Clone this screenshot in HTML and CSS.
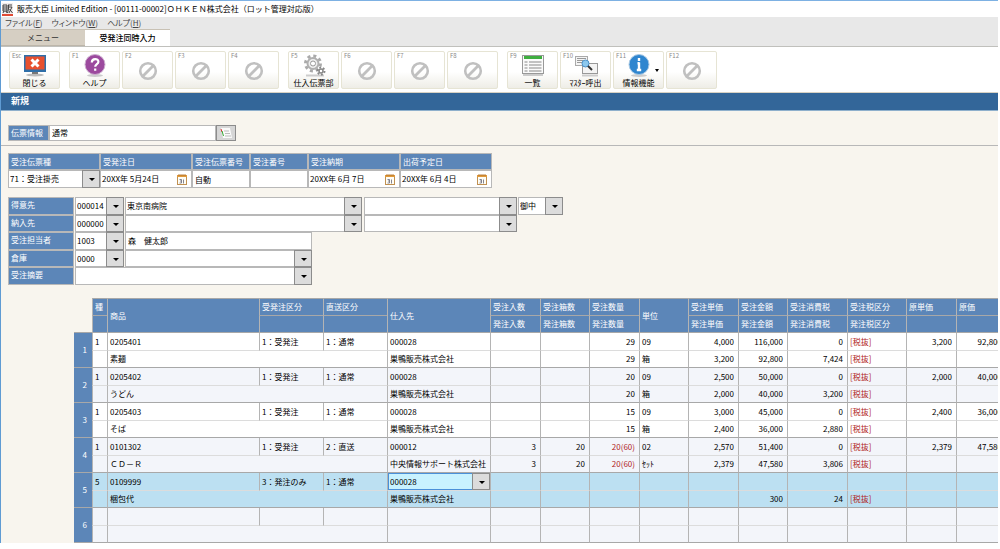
FILE: index.html
```html
<!DOCTYPE html>
<html lang="ja">
<head>
    <meta charset="UTF-8">
    <meta name="viewport" content="width=device-width, initial-scale=1.0">
    <title>販売大臣 Limited Edition</title>
    <link rel="stylesheet" href="styles.css">
</head>
<body>
    <!-- 共通アイコン -->
    <svg class="defs" width="0" height="0">
        <symbol id="icon-none" viewBox="0 0 20 20">
            <circle cx="10" cy="10" r="7.8" fill="none" stroke="#c0c0c0" stroke-width="2.6"/>
            <path d="M4.8 15.2L15.2 4.8" stroke="#c0c0c0" stroke-width="2.8"/>
        </symbol>
        <symbol id="icon-cal" viewBox="0 0 10 11">
            <rect x="0.5" y="1.5" width="9" height="9" fill="#fffdf5" stroke="#c09050"/>
            <rect x="0" y="1" width="10" height="2" fill="#e09a3c"/>
            <path d="M2 0v2M4 0v2M6 0v2M8 0v2" stroke="#a86820" stroke-width="0.8"/>
            <path d="M2.5 5.5h2v3.500h-2M3 7h1.500M6.500 5.500v4" stroke="#667" stroke-width="0.8" fill="none"/>
        </symbol>
    </svg>

    <div class="window">
        <header class="titlebar">
            <svg class="app-icon" width="11" height="13" viewBox="0 0 11 13">
                <rect width="11" height="11" fill="#f1eded"/>
                <path d="M1 2h4v6H1zM1 4h4M1 6h4M2 8l-1 2M4 8l1 2M6 2h4M6.500 2v4l-1 4M7 4h3l-3 6M7.500 6l3 4" stroke="#333" fill="none" stroke-width="0.9"/>
                <rect y="11" width="11" height="2" fill="#e04a35"/>
            </svg>
            <h1>販売大臣 Limited Edition - [00111-00002]ＯＨＫＥＮ株式会社（ロット管理対応版）</h1>
        </header>

        <nav class="menubar">
            <a href="#">ファイル(<u>F</u>)</a>
            <a href="#">ウィンドウ(<u>W</u>)</a>
            <a href="#">ヘルプ(<u>H</u>)</a>
        </nav>

        <div class="tabs">
            <button class="tab">メニュー</button>
            <button class="tab active">受発注同時入力</button>
        </div>

        <div class="toolbar">
            <div class="key-group">
                <button class="key"><span class="fn">Esc</span>
                    <svg class="icon" width="26" height="24" viewBox="0 0 26 24">
                        <ellipse cx="13" cy="21" rx="9" ry="1.500" fill="#bbb"/>
                        <path d="M10 17h6v3h-6z" fill="#777"/>
                        <rect x="2" y="1" width="22" height="17" fill="#2f6fa8"/>
                        <rect x="3.500" y="2.500" width="19" height="13" fill="#e8502e"/>
                        <path d="M9.500 5.500l7 7M16.500 5.500l-7 7" stroke="#fff" stroke-width="3"/>
                    </svg>
                    <span class="name">閉じる</span></button>
            </div>
            <div class="key-group">
                <button class="key"><span class="fn">F1</span>
                    <svg class="icon" width="26" height="24" viewBox="0 0 26 24">
                        <ellipse cx="13" cy="21.500" rx="8" ry="1.500" fill="#ccc"/>
                        <circle cx="13" cy="10.500" r="10" fill="#9c4a9e" stroke="#cdb0cf"/>
                        <path d="M9.800 8.500c0-4.500 6.600-4.300 6.600-.8 0 2.500-3.200 2.300-3.200 5M13.200 14.500v2.300" stroke="#fff" stroke-width="2.200" fill="none"/>
                    </svg>
                    <span class="name">ヘルプ</span></button>
                <button class="key" disabled><span class="fn">F2</span><svg class="none"><use href="#icon-none"/></svg></button>
                <button class="key" disabled><span class="fn">F3</span><svg class="none"><use href="#icon-none"/></svg></button>
                <button class="key" disabled><span class="fn">F4</span><svg class="none"><use href="#icon-none"/></svg></button>
            </div>
            <div class="key-group">
                <button class="key"><span class="fn">F5</span>
                    <svg class="icon" width="26" height="24" viewBox="0 0 26 24">
                        <path d="M5 21.500h18" stroke="#ccc" stroke-width="2"/>
                        <circle cx="12" cy="9.500" r="7.500" fill="none" stroke="#aaa" stroke-width="3" stroke-dasharray="3 2.900"/>
                        <circle cx="12" cy="9.500" r="5.500" fill="#eee" stroke="#b0b0b0" stroke-width="2"/>
                        <circle cx="12" cy="9.500" r="2.500" fill="#fff" stroke="#999"/>
                        <circle cx="20" cy="17" r="3.500" fill="none" stroke="#888" stroke-width="2" stroke-dasharray="1.800 1.800"/>
                        <circle cx="20" cy="17" r="2" fill="#fff" stroke="#888" stroke-width="1.500"/>
                    </svg>
                    <span class="name">仕入伝票部</span></button>
                <button class="key" disabled><span class="fn">F6</span><svg class="none"><use href="#icon-none"/></svg></button>
                <button class="key" disabled><span class="fn">F7</span><svg class="none"><use href="#icon-none"/></svg></button>
                <button class="key" disabled><span class="fn">F8</span><svg class="none"><use href="#icon-none"/></svg></button>
            </div>
            <div class="key-group">
                <button class="key"><span class="fn">F9</span>
                    <svg class="icon" width="26" height="24" viewBox="0 0 26 24">
                        <path d="M3 21h20" stroke="#ccc" stroke-width="2"/>
                        <rect x="2.500" y="1.500" width="21" height="18" fill="#fafafa" stroke="#999"/>
                        <rect x="4" y="2" width="18" height="3" fill="#3fae3f"/>
                        <path d="M4.500 8h3M4.500 11h3M4.500 14h3M4.500 17h3M9 8h12.500M9 11h12.500M9 14h12.500M9 17h12.500" stroke="#888"/>
                    </svg>
                    <span class="name">一覧</span></button>
                <button class="key"><span class="fn">F10</span>
                    <svg class="icon" width="26" height="24" viewBox="0 0 26 24">
                        <path d="M9 21.500h16" stroke="#ccc" stroke-width="2"/>
                        <rect x="2.500" y="2.500" width="12" height="9" fill="#f4f4f4" stroke="#aaa"/>
                        <path d="M4 4.500h9M4 6.500h6M4 8.500h5" stroke="#999"/>
                        <rect x="9.500" y="9.500" width="15" height="10" fill="#f4f4f4" stroke="#999"/>
                        <circle cx="12.500" cy="9.500" r="3.500" fill="#8cc8ee" stroke="#4a90c8"/>
                        <path d="M15 12l4 4" stroke="#333" stroke-width="2"/>
                    </svg>
                    <span class="name">ﾏｽﾀｰ呼出</span></button>
                <button class="key more"><span class="fn">F11</span>
                    <svg class="icon" width="26" height="24" viewBox="0 0 26 24">
                        <ellipse cx="13" cy="21.500" rx="8" ry="1.500" fill="#ccc"/>
                        <circle cx="13" cy="10.500" r="10" fill="#2f86cf" stroke="#a9c9e4"/>
                        <path d="M13 4v3M13 8.500v8M11.500 9.200h2M10.800 16h4.400" stroke="#fff" stroke-width="2.400"/>
                    </svg>
                    <span class="name">情報機能</span></button>
                <button class="key" disabled><span class="fn">F12</span><svg class="none"><use href="#icon-none"/></svg></button>
            </div>
        </div>

        <h2 class="mode">新規</h2>

        <div class="slip-info">
            <label class="label" for="slip">伝票情報</label>
            <input class="field slip" id="slip" value="通常">
            <button class="memo" aria-label="一覧">
                <svg width="14" height="12" viewBox="0 0 14 12">
                    <path d="M2 1h9l2 10H4z" fill="#fafafa"/>
                    <path d="M5 4h5M6 6.500h5M6 9h6" stroke="#bbb"/>
                    <path d="M2 2l1 3" stroke="#d33"/>
                    <path d="M3 4l1.500 5" stroke="#3a3"/>
                </svg>
            </button>
        </div>

        <main>
            <div class="slip-head">
                <div class="col wide">
                    <label class="label" for="kind">受注伝票種</label>
                    <span class="combo"><select id="kind"><option>71：受注掛売</option></select></span>
                </div>
                <div class="col wide">
                    <label class="label" for="date1">受発注日</label>
                    <span class="date"><input id="date1" value="20XX年 5月24日"><button aria-label="日付"><svg width="10" height="11"><use href="#icon-cal"/></svg></button></span>
                </div>
                <div class="col">
                    <label class="label" for="no1">受注伝票番号</label>
                    <input class="field" id="no1" value="自動">
                </div>
                <div class="col">
                    <label class="label" for="no2">受注番号</label>
                    <input class="field" id="no2">
                </div>
                <div class="col wide">
                    <label class="label" for="date2">受注納期</label>
                    <span class="date"><input id="date2" value="20XX年 6月 7日"><button aria-label="日付"><svg width="10" height="11"><use href="#icon-cal"/></svg></button></span>
                </div>
                <div class="col wide">
                    <label class="label" for="date3">出荷予定日</label>
                    <span class="date"><input id="date3" value="20XX年 6月 4日"><button aria-label="日付"><svg width="10" height="11"><use href="#icon-cal"/></svg></button></span>
                </div>
            </div>

            <div class="party">
                <div class="line">
                    <label class="label" for="customer">得意先</label>
                    <span class="combo code"><select id="customer"><option>000014</option></select></span>
                    <span class="combo name1"><select aria-label="得意先名"><option>東京南病院</option></select></span>
                    <span class="combo name2"><select aria-label="得意先名2"><option></option></select></span>
                    <span class="combo title"><select aria-label="敬称"><option>御中</option></select></span>
                </div>
                <div class="line">
                    <label class="label" for="dest">納入先</label>
                    <span class="combo code"><select id="dest"><option>000000</option></select></span>
                    <span class="combo name1"><select aria-label="納入先名"><option></option></select></span>
                    <span class="combo name2"><select aria-label="納入先名2"><option></option></select></span>
                </div>
                <div class="line">
                    <label class="label" for="staff">受注担当者</label>
                    <span class="combo code"><select id="staff"><option>1003</option></select></span>
                    <input class="field middle" aria-label="担当者名" value="森　健太郎">
                </div>
                <div class="line">
                    <label class="label" for="store">倉庫</label>
                    <span class="combo code"><select id="store"><option>0000</option></select></span>
                    <span class="combo middle"><select aria-label="倉庫名"><option></option></select></span>
                </div>
                <div class="line">
                    <label class="label" for="note">受注摘要</label>
                    <span class="combo note"><select id="note"><option></option></select></span>
                </div>
            </div>

            <div class="detail">
                <table>
                    <colgroup>
                        <col class="w-no"><col class="w-type"><col class="w-item"><col class="w-div"><col class="w-div">
                        <col class="w-vendor"><col class="w-a"><col class="w-b"><col class="w-a"><col class="w-b">
                        <col class="w-a"><col class="w-b"><col class="w-tax"><col class="w-taxdiv"><col class="w-a"><col class="w-a">
                    </colgroup>
                    <thead>
                        <tr>
                            <td class="corner" rowspan="2"></td>
                            <th>種</th><th rowspan="2">商品</th><th>受発注区分</th><th>直送区分</th><th rowspan="2">仕入先</th>
                            <th>受注入数</th><th>受注箱数</th><th>受注数量</th><th rowspan="2">単位</th>
                            <th>受注単価</th><th>受注金額</th><th>受注消費税</th><th>受注税区分</th><th>原単価</th><th>原価</th>
                        </tr>
                        <tr>
                            <th></th><th></th><th></th><th>発注入数</th><th>発注箱数</th><th>発注数量</th>
                            <th>発注単価</th><th>発注金額</th><th>発注消費税</th><th>発注税区分</th><th></th><th></th>
                        </tr>
                    </thead>
                    <tbody>
                        <tr>
                            <th rowspan="2">1</th><td>1</td><td>0205401</td><td>1：受発注</td><td>1：通常</td><td>000028</td>
                            <td></td><td></td><td class="num">29</td><td>09</td>
                            <td class="num">4,000</td><td class="num">116,000</td><td class="num">0</td><td class="red">[税抜]</td><td class="num">3,200</td><td class="num">92,800</td>
                        </tr>
                        <tr>
                            <td></td><td colspan="3">素麺</td><td>巣鴨販売株式会社</td>
                            <td></td><td></td><td class="num">29</td><td>箱</td>
                            <td class="num">3,200</td><td class="num">92,800</td><td class="num">7,424</td><td class="red">[税抜]</td><td></td><td></td>
                        </tr>
                    </tbody>
                    <tbody class="alt">
                        <tr>
                            <th rowspan="2">2</th><td>1</td><td>0205402</td><td>1：受発注</td><td>1：通常</td><td>000028</td>
                            <td></td><td></td><td class="num">20</td><td>09</td>
                            <td class="num">2,500</td><td class="num">50,000</td><td class="num">0</td><td class="red">[税抜]</td><td class="num">2,000</td><td class="num">40,000</td>
                        </tr>
                        <tr>
                            <td></td><td colspan="3">うどん</td><td>巣鴨販売株式会社</td>
                            <td></td><td></td><td class="num">20</td><td>箱</td>
                            <td class="num">2,000</td><td class="num">40,000</td><td class="num">3,200</td><td class="red">[税抜]</td><td></td><td></td>
                        </tr>
                    </tbody>
                    <tbody>
                        <tr>
                            <th rowspan="2">3</th><td>1</td><td>0205403</td><td>1：受発注</td><td>1：通常</td><td>000028</td>
                            <td></td><td></td><td class="num">15</td><td>09</td>
                            <td class="num">3,000</td><td class="num">45,000</td><td class="num">0</td><td class="red">[税抜]</td><td class="num">2,400</td><td class="num">36,000</td>
                        </tr>
                        <tr>
                            <td></td><td colspan="3">そば</td><td>巣鴨販売株式会社</td>
                            <td></td><td></td><td class="num">15</td><td>箱</td>
                            <td class="num">2,400</td><td class="num">36,000</td><td class="num">2,880</td><td class="red">[税抜]</td><td></td><td></td>
                        </tr>
                    </tbody>
                    <tbody class="alt">
                        <tr>
                            <th rowspan="2">4</th><td>1</td><td>0101302</td><td>1：受発注</td><td>2：直送</td><td>000012</td>
                            <td class="num">3</td><td class="num">20</td><td class="num red">20(60)</td><td>02</td>
                            <td class="num">2,570</td><td class="num">51,400</td><td class="num">0</td><td class="red">[税抜]</td><td class="num">2,379</td><td class="num">47,580</td>
                        </tr>
                        <tr>
                            <td></td><td colspan="3">ＣＤ－Ｒ</td><td>中央情報サポート株式会社</td>
                            <td class="num">3</td><td class="num">20</td><td class="num red">20(60)</td><td>ｾｯﾄ</td>
                            <td class="num">2,379</td><td class="num">47,580</td><td class="num">3,806</td><td class="red">[税抜]</td><td></td><td></td>
                        </tr>
                    </tbody>
                    <tbody class="current">
                        <tr>
                            <th rowspan="2">5</th><td>5</td><td>0109999</td><td>3：発注のみ</td><td>1：通常</td>
                            <td class="edit"><span class="combo"><select aria-label="仕入先"><option>000028</option></select></span></td>
                            <td></td><td></td><td></td><td></td><td></td><td></td><td></td><td></td><td></td><td></td>
                        </tr>
                        <tr>
                            <td></td><td colspan="3">梱包代</td><td>巣鴨販売株式会社</td>
                            <td></td><td></td><td></td><td></td>
                            <td></td><td class="num">300</td><td class="num">24</td><td class="red">[税抜]</td><td></td><td></td>
                        </tr>
                    </tbody>
                    <tbody class="alt">
                        <tr>
                            <th rowspan="2">6</th><td></td><td></td><td></td><td></td><td></td><td></td><td></td><td></td><td></td><td></td><td></td><td></td><td></td><td></td><td></td>
                        </tr>
                        <tr>
                            <td></td><td colspan="3"></td><td></td><td></td><td></td><td></td><td></td><td></td><td></td><td></td><td></td><td></td><td></td>
                        </tr>
                    </tbody>
                </table>
            </div>
        </main>
    </div>
</body>
</html>
```
FILE: styles.css
```css
* {
    box-sizing: border-box;
}

body {
    margin: 0;
    background: #fff;
    font-family: "Noto Sans CJK JP", sans-serif;
    font-size: 8px;
    line-height: 12px;
    color: #000;
}

button, input, select {
    margin: 0;
    padding: 0;
    border: 0;
    border-radius: 0;
    background: none;
    font: inherit;
    color: inherit;
}

.defs {
    position: absolute;
}

.window {
    margin-right: 2px;
    border-top: 1px solid #7db1e3;
    border-left: 1px solid #5f9bd3;
    background: #f8f5ee;
}

/* タイトル・メニュー */
.titlebar {
    display: flex;
    align-items: center;
    gap: 4px;
    height: 16px;
    padding-left: 1px;
    background: #fff;
}

.titlebar h1 {
    margin: 0;
    font-size: 8px;
    font-weight: normal;
}

.menubar {
    display: flex;
    gap: 9px;
    height: 12px;
    padding-left: 4px;
    background: #e8e8e8;
    font-feature-settings: "palt";
}

.menubar a {
    color: #444;
    text-decoration: none;
}

.tabs {
    display: flex;
    height: 17px;
    background: #e8e8e8;
}

.tab {
    width: 84px;
    background: #d6cfc3;
    border-top: 1px solid #c8c1b4;
    border-bottom: 1px solid #bdb6aa;
    color: #333;
}

.tab.active {
    width: 85px;
    background: #fff;
    border-bottom-color: #fff;
    color: #000;
    font-weight: 500;
}

/* ファンクションキー */
.toolbar {
    display: flex;
    gap: 9px;
    padding: 4px 8px 3px;
    background: #fff;
    border-top: 1px solid #c0c0bc;
    border-bottom: 1px solid #d8d2c4;
}

.key-group {
    display: flex;
    gap: 2px;
}

.key {
    position: relative;
    width: 51px;
    height: 38px;
    display: flex;
    flex-direction: column;
    align-items: center;
    justify-content: space-between;
    padding-top: 2px;
    border: 1px solid #e6e4d4;
    border-radius: 2px;
    background: linear-gradient(#fff 55%, #eeede6);
}

.key .fn {
    position: absolute;
    top: 0;
    left: 2px;
    color: #888;
    font-size: 6px;
    line-height: 8px;
}

.key .icon {
    flex-shrink: 0;
}

.key .name {
    line-height: 10px;
}

.key .none {
    width: 20px;
    height: 20px;
    margin: auto;
}

.key.more::after {
    content: "";
    position: absolute;
    right: 4px;
    top: 17px;
    border: 2px solid transparent;
    border-top: 3px solid #000;
}

.mode {
    margin: 0;
    padding: 2px 10px 3px;
    background: #336699;
    border-bottom: 1px solid #8fb0cc;
    color: #fff;
    font-size: 9px;
}

/* 入力部品 */
.label {
    display: block;
    padding-left: 2px;
    background: #5c86b8;
    color: #fff;
    line-height: 14px;
    border: 1px solid #b8b8b8;
}

.field, .date, .combo {
    display: block;
    background: #fff;
    border: 1px solid #b8b8b8;
}

.field {
    padding-left: 2px;
}

.combo {
    position: relative;
}

.combo select {
    display: block;
    width: 100%;
    height: 100%;
    padding-left: 1px;
    appearance: none;
}

.combo::before {
    content: "";
    position: absolute;
    top: -1px;
    right: -1px;
    bottom: -1px;
    width: 16px;
    background: #dcdcdc;
    border: 1px solid #8c8c8c;
    pointer-events: none;
}

.combo::after {
    content: "";
    position: absolute;
    right: 4px;
    top: 50%;
    margin-top: -1px;
    border: 3px solid transparent;
    border-top-color: #000;
    border-bottom: 0;
    pointer-events: none;
}

.slip-info {
    display: flex;
    height: 35px;
    padding: 14px 0 4px 7px;
    border-bottom: 1px solid #b8b8b8;
}

.slip-info .label {
    width: 41px;
}

.slip {
    width: 167px;
}

.memo {
    display: flex;
    align-items: center;
    justify-content: center;
    width: 20px;
    background: #d6d6d6;
    border: 1px solid #8c8c8c;
}

main {
    padding: 7px 0 0 7px;
}

.slip-head {
    display: flex;
}

.col {
    width: 58px;
}

.col.wide {
    width: 92px;
}

.col .label {
    line-height: 15px;
}

.col .field, .col .combo, .col .date {
    width: 100%;
    height: 18px;
}

.date {
    display: flex;
    align-items: center;
    justify-content: space-between;
    padding: 0 4px 0 1px;
}

.date input {
    width: 70px;
}

.date button, .date svg {
    display: block;
}

.party {
    margin-top: 9px;
}

.line {
    display: flex;
    height: 17px;
}

.line:nth-child(odd) {
    height: 18px;
}

.line .label {
    width: 66px;
    margin-right: 1px;
}

.code {
    width: 49px;
    margin-right: 1px;
}

.name1 {
    width: 237px;
}

.name2 {
    width: 153px;
    margin: 0 1px 0 2px;
}

.title {
    width: 45px;
}

.middle {
    width: 187px;
}

.note {
    width: 237px;
}

/* 明細 */
.detail {
    margin: 13px 0 0 66px;
    overflow: hidden;
}

.detail table {
    width: 932px;
    table-layout: fixed;
    border-collapse: separate;
    border-spacing: 0;
}

.w-no { width: 18px; }
.w-type { width: 15px; }
.w-item { width: 152px; }
.w-div { width: 64px; }
.w-vendor { width: 103px; }
.w-a { width: 50px; }
.w-b { width: 49px; }
.w-tax { width: 60px; }
.w-taxdiv { width: 59px; }

.detail th, .detail td {
    height: 17px;
    padding: 0 3px 0 2px;
    border-left: 1px solid #b4b4b4;
    border-bottom: 1px solid #a8a8a8;
    text-align: left;
    font-weight: normal;
    white-space: nowrap;
}

.detail tr:first-child > * {
    height: 18px;
}

.detail th {
    background: #5c86b8;
    color: #fff;
}

.detail thead tr:first-child th {
    border-top: 1px solid #a8a8a8;
}

.detail thead .corner {
    border-left: 0;
}

.detail tbody {
    background: #fff;
}

.detail tbody th {
    border-left: 0;
    padding-right: 5px;
    text-align: right;
}

.detail tbody tr:first-child td {
    border-bottom-color: #dcdcdc;
}

.detail .alt {
    background: #f3f5fa;
}

.detail .current {
    background: #bce0f2;
}

.detail .num {
    padding-right: 4px;
    text-align: right;
}

.detail .red {
    color: #b01c24;
}

.detail td.edit {
    padding: 0;
}

.edit .combo {
    height: 17px;
    background: #c8f2ff;
    border-color: #4a90d9;
}
```
